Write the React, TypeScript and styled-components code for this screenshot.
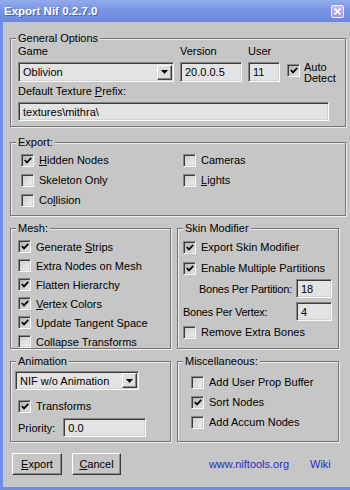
import React from 'react';
import styled, { createGlobalStyle } from 'styled-components';

const GRAY = '#c6c6c6';
const BLUE = '#6f8ee0';

const GlobalStyle = createGlobalStyle`
  html, body {
    margin: 0;
    padding: 0;
    background: ${BLUE};
  }
  body {
    font-family: "Liberation Sans", Arial, sans-serif;
    font-size: 11px;
    color: #000;
  }
`;

const Window = styled.div`
  width: 350px;
  height: 490px;
  display: flex;
  flex-direction: column;
  background: ${BLUE};
`;

const TitleBar = styled.div`
  height: 22px;
  flex: none;
  display: flex;
  align-items: center;
  justify-content: space-between;
  padding: 0 6px 0 4px;
  background: linear-gradient(#93acee, #7894e4 45%, #6b89dc);
`;

const TitleText = styled.span`
  color: #fff;
  font-weight: bold;
  font-size: 11.5px;
  text-shadow: 1px 1px 0 #4b64b0;
`;

const CloseButton = styled.span`
  width: 13px;
  height: 13px;
  box-sizing: border-box;
  border: 1px solid #f2f2ff;
  border-radius: 2px;
  background: linear-gradient(#c9bdf0, #a595dc);
  display: flex;
  align-items: center;
  justify-content: center;
`;

const Frame = styled.div`
  flex: 1;
  display: flex;
  border-left: 3px solid ${BLUE};
  border-right: 6px solid ${BLUE};
  border-bottom: 3px solid ${BLUE};
`;

const Client = styled.div`
  flex: 1;
  background: ${GRAY};
  padding: 10px 5px 0 7px;
  display: flex;
  flex-direction: column;
`;

const Group = styled.fieldset<{ $h: number }>`
  margin: 0;
  padding: 0;
  min-width: 0;
  height: ${(p) => p.$h}px;
  box-sizing: border-box;
  border: 1px solid #767676;
  box-shadow: inset 1px 1px 0 #ececec, 1px 1px 0 #ececec;
`;

const Legend = styled.legend`
  margin-left: 5px;
  padding: 0 2px;
  line-height: 13px;
  background: ${GRAY};
`;

const GroupRow = styled.div<{ $mt: number }>`
  display: flex;
  gap: 6px;
  margin-top: ${(p) => p.$mt}px;
  & > fieldset {
    flex: none;
  }
`;

const Inner = styled.div<{ $pl: number; $pt?: number; $pr?: number }>`
  padding: ${(p) => p.$pt ?? 0}px ${(p) => p.$pr ?? 0}px 0 ${(p) => p.$pl}px;
  display: flex;
  flex-direction: column;
`;

const Label = styled.div`
  line-height: 13px;
  white-space: nowrap;
`;

const Field = styled.div<{ $mt?: number }>`
  display: flex;
  flex-direction: column;
  gap: 4px;
  margin-top: ${(p) => p.$mt ?? 0}px;
`;

const FieldRow = styled.div`
  display: flex;
  gap: 6px;
  height: 37px;
`;

const sunken = `
  box-sizing: border-box;
  border-top: 1px solid #858585;
  border-left: 1px solid #858585;
  border-right: 1px solid #fafafa;
  border-bottom: 1px solid #fafafa;
  box-shadow: inset 1px 1px 0 #3c3c3c, inset -1px -1px 0 #d2d2d2;
`;

const Edit = styled.div<{ $w: number; $h?: number }>`
  ${sunken}
  flex: none;
  width: ${(p) => p.$w}px;
  height: ${(p) => p.$h ?? 19}px;
  background: #e3e3e3;
  padding-left: 4px;
  display: flex;
  align-items: center;
  white-space: nowrap;
  letter-spacing: 0;
`;

const Combo = styled(Edit)`
  justify-content: space-between;
  padding-right: 1px;
`;

const DropButton = styled.span`
  width: 15px;
  height: 15px;
  box-sizing: border-box;
  background: #dedede;
  border-top: 1px solid #fff;
  border-left: 1px solid #fff;
  border-right: 1px solid #404040;
  border-bottom: 1px solid #404040;
  box-shadow: inset -1px -1px 0 #8a8a8a;
  display: flex;
  align-items: center;
  justify-content: center;
`;

const Box = styled.span<{ $checked?: boolean }>`
  ${sunken}
  flex: none;
  width: 13px;
  height: 13px;
  background: ${(p) =>
    p.$checked ? 'linear-gradient(135deg, #b0b0b0, #e8e8e8)' : 'linear-gradient(135deg, #cacaca, #f2f2f2)'};
  display: flex;
  align-items: center;
  justify-content: center;
`;

const CheckRow = styled.div<{ $h?: number; $ml?: number; $mt?: number }>`
  display: flex;
  align-items: center;
  gap: 5px;
  height: ${(p) => p.$h ?? 19}px;
  margin: ${(p) => p.$mt ?? 0}px 0 0 ${(p) => p.$ml ?? 0}px;
  white-space: nowrap;
`;

const ExportGrid = styled.div`
  display: grid;
  grid-template-columns: 162px auto;
  grid-auto-rows: 20px;
  padding: 1px 0 0 10px;
`;

const AutoDetect = styled.div`
  display: flex;
  gap: 4px;
  padding-top: 17px;
  margin-left: 1px;
  & > span {
    margin-top: 2px;
  }
`;

const AutoText = styled.div`
  line-height: 11px;
`;

const SpinRow = styled.div<{ $mt?: number; $indent?: number }>`
  display: flex;
  align-items: center;
  justify-content: space-between;
  margin-top: ${(p) => p.$mt ?? 0}px;
  padding-left: ${(p) => p.$indent ?? 0}px;
  white-space: nowrap;
  letter-spacing: -0.25px;
`;

const PriorityRow = styled(SpinRow)`
  justify-content: flex-start;
  gap: 8px;
  letter-spacing: 0;
`;

const Footer = styled.div`
  display: flex;
  align-items: center;
  gap: 10px;
  margin-top: 11px;
  padding: 0 15px 0 2px;
`;

const Button = styled.button<{ $w: number }>`
  width: ${(p) => p.$w}px;
  height: 22px;
  box-sizing: border-box;
  padding: 0;
  font: inherit;
  color: #000;
  background: ${GRAY};
  border-top: 1px solid #fff;
  border-left: 1px solid #fff;
  border-right: 1px solid #3a3a3a;
  border-bottom: 1px solid #3a3a3a;
  box-shadow: inset -1px -1px 0 #8a8a8a;
`;

const Links = styled.div`
  margin-left: auto;
  display: flex;
  gap: 21px;
`;

const Link = styled.a`
  color: #2a2ac8;
  text-decoration: none;
`;

const Check = () => (
  <svg width="8" height="7" viewBox="0 0 8 7">
    <path d="M0.8 3 L3 5.4 L7.3 0.8" fill="none" stroke="#000" strokeWidth="1.7" />
  </svg>
);

const Arrow = () => (
  <svg width="7" height="4" viewBox="0 0 7 4">
    <path d="M0 0 H7 L3.5 4 Z" fill="#000" />
  </svg>
);

type CheckProps = { checked?: boolean; children: React.ReactNode; h?: number; ml?: number; mt?: number };

const CheckBox = ({ checked, children, h, ml, mt }: CheckProps) => (
  <CheckRow $h={h} $ml={ml} $mt={mt}>
    <Box $checked={checked}>{checked && <Check />}</Box>
    <span>{children}</span>
  </CheckRow>
);

export default function App() {
  return (
    <Window>
      <GlobalStyle />
      <TitleBar>
        <TitleText>Export Nif 0.2.7.0</TitleText>
        <CloseButton>
          <svg width="7" height="7" viewBox="0 0 7 7">
            <path d="M0.5 0.5 L6.5 6.5 M6.5 0.5 L0.5 6.5" stroke="#fff" strokeWidth="1.6" />
          </svg>
        </CloseButton>
      </TitleBar>
      <Frame>
        <Client>
          <Group $h={95}>
            <Legend>General Options</Legend>
            <Inner $pl={7} $pr={9}>
              <FieldRow>
                <Field>
                  <Label>Game</Label>
                  <Combo $w={156} $h={20}>
                    <span>Oblivion</span>
                    <DropButton>
                      <Arrow />
                    </DropButton>
                  </Combo>
                </Field>
                <Field>
                  <Label>Version</Label>
                  <Edit $w={62} $h={20}>20.0.0.5</Edit>
                </Field>
                <Field>
                  <Label>User</Label>
                  <Edit $w={32} $h={20}>11</Edit>
                </Field>
                <AutoDetect>
                  <Box $checked>
                    <Check />
                  </Box>
                  <AutoText>
                    Auto
                    <br />
                    Detect
                  </AutoText>
                </AutoDetect>
              </FieldRow>
              <Field $mt={3}>
                <Label>
                  Default Texture <u>P</u>refix:
                </Label>
                <Edit $w={311}>textures\mithra\</Edit>
              </Field>
            </Inner>
          </Group>

          <GroupRow $mt={9}>
            <Group $h={80} style={{ flex: 1 }}>
              <Legend>Export:</Legend>
              <ExportGrid>
                <CheckBox checked h={20}>
                  <u>H</u>idden Nodes
                </CheckBox>
                <CheckBox h={20}>Cameras</CheckBox>
                <CheckBox h={20}>Skeleton Only</CheckBox>
                <CheckBox h={20}>
                  <u>L</u>ights
                </CheckBox>
                <CheckBox h={20}>
                  Co<u>l</u>lision
                </CheckBox>
              </ExportGrid>
            </Group>
          </GroupRow>

          <GroupRow $mt={6}>
            <Group $h={127} style={{ width: 161 }}>
              <Legend>Mesh:</Legend>
              <Inner $pl={7} $pt={2}>
                <CheckBox checked>
                  Generate <u>S</u>trips
                </CheckBox>
                <CheckBox>Extra Nodes on Mesh</CheckBox>
                <CheckBox checked>Flatten Hierarchy</CheckBox>
                <CheckBox checked>
                  <u>V</u>ertex Colors
                </CheckBox>
                <CheckBox checked>Update Tangent Space</CheckBox>
                <CheckBox>Collapse Transforms</CheckBox>
              </Inner>
            </Group>
            <Group $h={127} style={{ width: 162 }}>
              <Legend>Skin Modifier</Legend>
              <Inner $pl={5} $pt={2} $pr={6}>
                <CheckBox checked h={20}>
                  Export Skin Modifier
                </CheckBox>
                <CheckBox checked h={22}>
                  Enable Multiple Partitions
                </CheckBox>
                <SpinRow $indent={16}>
                  <span>Bones Per Partition:</span>
                  <Edit $w={36}>18</Edit>
                </SpinRow>
                <SpinRow $mt={4}>
                  <span>Bones Per Vertex:</span>
                  <Edit $w={36}>4</Edit>
                </SpinRow>
                <CheckBox h={22}>Remove Extra Bones</CheckBox>
              </Inner>
            </Group>
          </GroupRow>

          <GroupRow $mt={6}>
            <Group $h={87} style={{ width: 161 }}>
              <Legend>Animation</Legend>
              <Inner $pl={4} $pt={3}>
                <Combo $w={124}>
                  <span>NIF w/o Animation</span>
                  <DropButton>
                    <Arrow />
                  </DropButton>
                </Combo>
                <CheckBox checked h={18} ml={3} mt={7}>
                  Transforms
                </CheckBox>
                <PriorityRow $mt={3} $indent={3}>
                  <span>Priority:</span>
                  <Edit $w={83}>0.0</Edit>
                </PriorityRow>
              </Inner>
            </Group>
            <Group $h={87} style={{ width: 162 }}>
              <Legend>Miscellaneous:</Legend>
              <Inner $pl={13} $pt={4}>
                <CheckBox h={20}>Add User Prop Buffer</CheckBox>
                <CheckBox checked h={20}>
                  Sort Nodes
                </CheckBox>
                <CheckBox h={20}>Add Accum Nodes</CheckBox>
              </Inner>
            </Group>
          </GroupRow>

          <Footer>
            <Button $w={50}>
              <u>E</u>xport
            </Button>
            <Button $w={49}>
              <u>C</u>ancel
            </Button>
            <Links>
              <Link href="#">www.niftools.org</Link>
              <Link href="#">Wiki</Link>
            </Links>
          </Footer>
        </Client>
      </Frame>
    </Window>
  );
}
